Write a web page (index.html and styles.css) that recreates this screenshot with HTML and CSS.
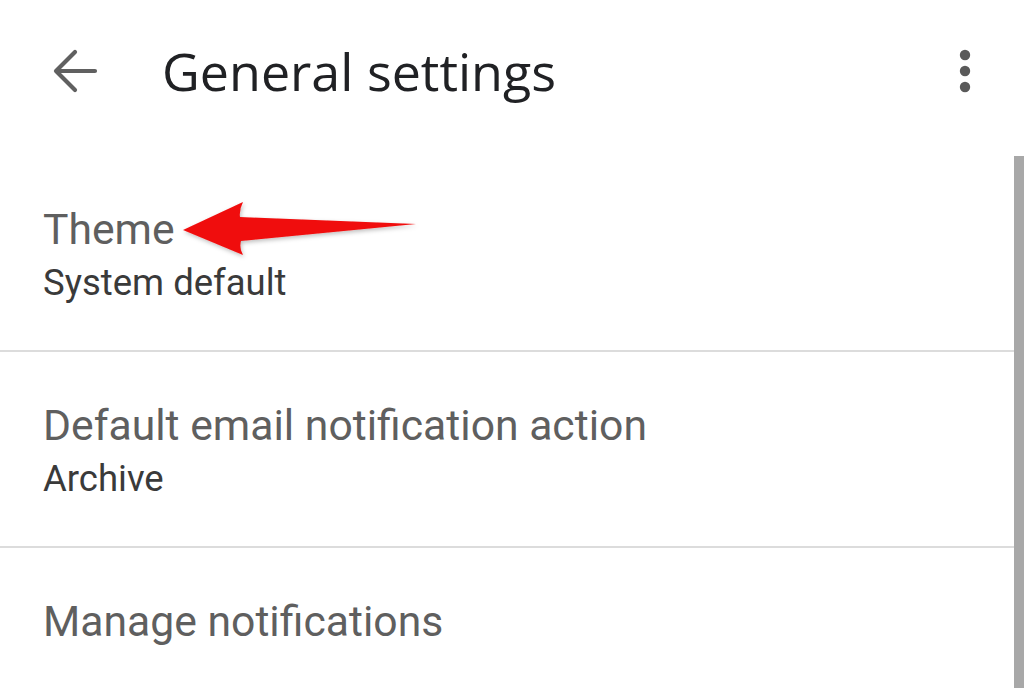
FILE: index.html
```html
<!DOCTYPE html>
<html>
<head>
<meta charset="utf-8">
<link rel="stylesheet" href="styles.css">
</head>
<body>
<div class="screen">
  <header class="appbar">
    <svg class="back" width="48" height="48" viewBox="0 0 48 48">
      <path d="M44 24H6M24 5L5 24l19 19" fill="none" stroke="#606060" stroke-width="4.2" stroke-linecap="round" stroke-linejoin="round"/>
    </svg>
    <h1 class="title">General settings</h1>
    <svg class="kebab" width="14" height="48" viewBox="0 0 14 48">
      <circle cx="7" cy="8" r="5.2" fill="#5a5a5a"/>
      <circle cx="7" cy="24" r="5.2" fill="#5a5a5a"/>
      <circle cx="7" cy="40" r="5.2" fill="#5a5a5a"/>
    </svg>
  </header>
  <main class="list">
    <div class="item first">
      <div class="item-title">Theme</div>
      <div class="item-sub">System default</div>
      <svg class="annot" width="250" height="70" viewBox="0 0 250 70">
        <defs>
          <filter id="sh" x="-10%" y="-30%" width="120%" height="160%">
            <feDropShadow dx="1" dy="2" stdDeviation="2" flood-color="#000" flood-opacity="0.25"/>
          </filter>
        </defs>
        <path d="M2 38 L62 10 Q58 18 59 25 L235 32 L60 49 Q58 56 62 63 Z" fill="#f00d0d" filter="url(#sh)"/>
      </svg>
    </div>
    <div class="item">
      <div class="item-title">Default email notification action</div>
      <div class="item-sub">Archive</div>
    </div>
    <div class="item last">
      <div class="item-title">Manage notifications</div>
    </div>
  </main>
  <div class="scrollbar"></div>
</div>
</body>
</html>
```
FILE: styles.css
```css
html, body {
  margin: 0;
  padding: 0;
  background: #ffffff;
}
.screen {
  position: relative;
  width: 1024px;
  height: 688px;
  overflow: hidden;
  font-family: Roboto, "Liberation Sans", sans-serif;
}
.appbar {
  display: flex;
  align-items: center;
  height: 142px;
  padding: 0 0 0 51px;
  box-sizing: border-box;
}
.back {
  flex: none;
}
.title {
  flex: 1;
  margin: 0 0 0 63px;
  font-family: "Open Sans", sans-serif;
  font-weight: 400;
  font-size: 52px;
  color: #202124;
  letter-spacing: 0;
  line-height: 1;
}
.kebab {
  flex: none;
  margin-right: 52px;
}
.list {
  display: flex;
  flex-direction: column;
  padding-top: 14px;
}
.item {
  position: relative;
  display: flex;
  flex-direction: column;
  height: 196px;
  padding: 47px 43px 0;
  border-bottom: 2px solid #dcdcdc;
  box-sizing: border-box;
}
.item.last {
  border-bottom: none;
}
.item-title {
  font-size: 42.7px;
  line-height: 52px;
  color: #5f5f5f;
}
.item-sub {
  font-size: 36.5px;
  line-height: 56px;
  color: #3a3a3a;
}
.annot {
  position: absolute;
  left: 181px;
  top: 36px;
}
.scrollbar {
  position: absolute;
  right: 0;
  top: 156px;
  width: 10px;
  bottom: 0;
  background: #a8a8a8;
}
```
